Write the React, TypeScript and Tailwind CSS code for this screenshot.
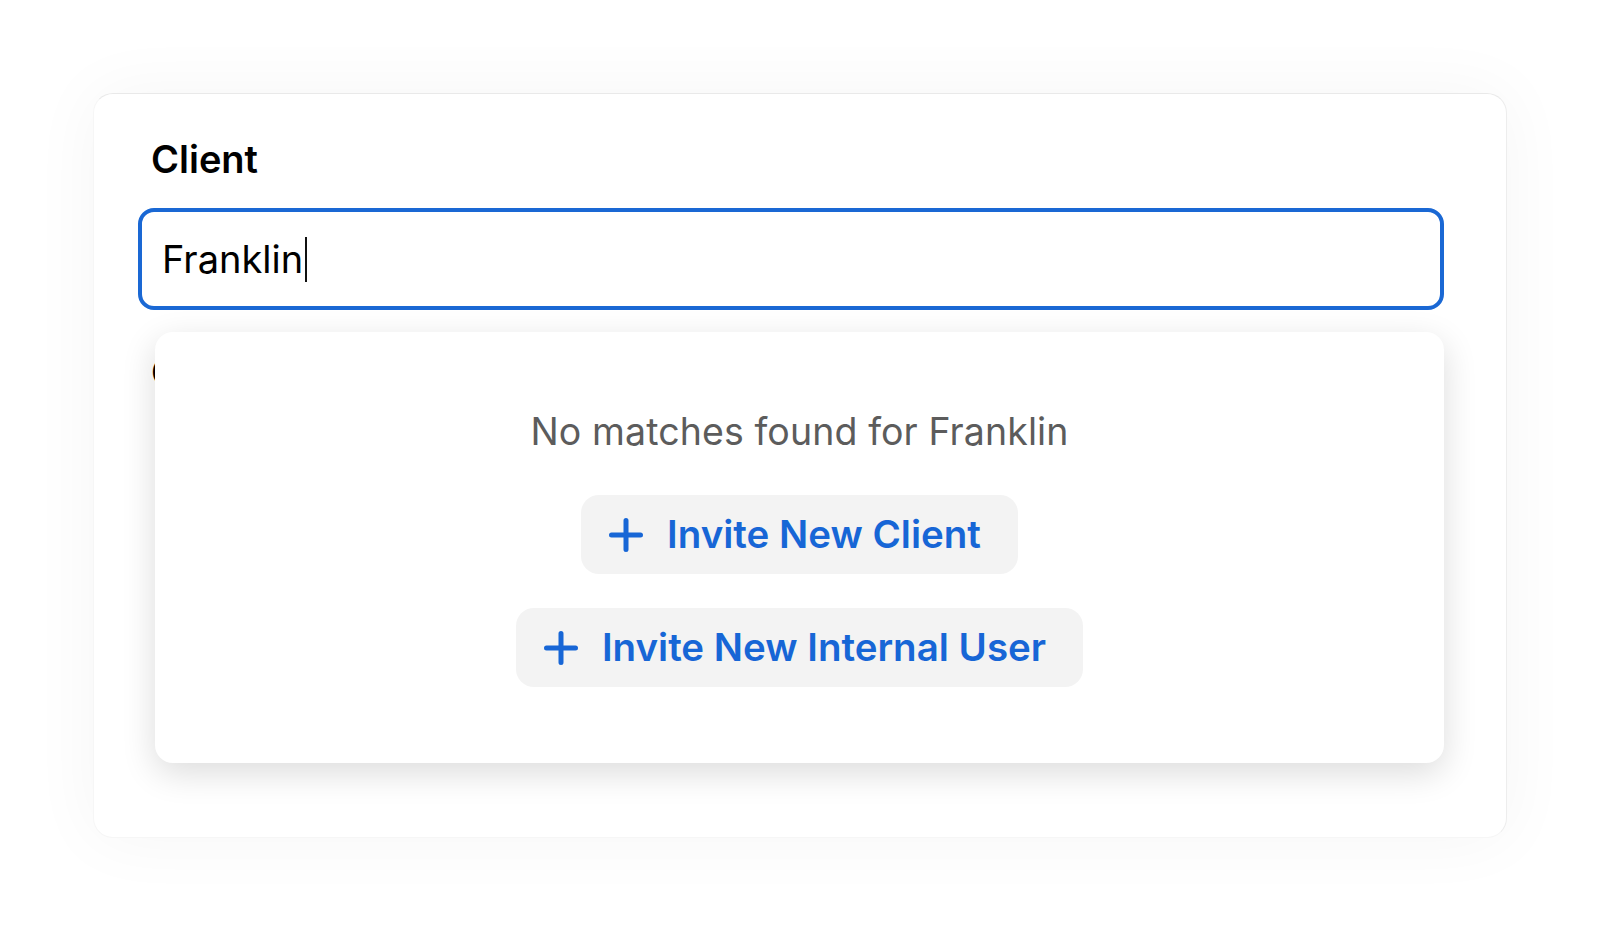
import { useState } from "react";

function PlusIcon() {
  return (
    <svg width="34" height="34" viewBox="0 0 34 34" fill="none">
      <path
        d="M17 2.5V31.5M2.5 17H31.5"
        stroke="currentColor"
        strokeWidth="5"
        strokeLinecap="round"
      />
    </svg>
  );
}

function InviteButton({ label }: { label: string }) {
  return (
    <button
      type="button"
      className="inline-flex items-center h-[79px] pl-[28px] pr-[37px] gap-[24px] rounded-[18px] bg-[#f3f3f3] text-[#1766d6] text-[38.5px] font-semibold leading-none"
    >
      <PlusIcon />
      <span>{label}</span>
    </button>
  );
}

function App() {
  const [busca] = useState<string>("Franklin");

  return (
    <div
      className="w-[1600px] h-[930px] bg-white flex items-start justify-center pt-[93px]"
      style={{ fontFamily: "Inter, 'Noto Sans', 'Liberation Sans', sans-serif" }}
    >
      <div className="w-[1414px] h-[745px] rounded-[20px] bg-white border border-t-[#e9e9e9] border-r-[#ededed] border-l-[#f6f6f6] border-b-[#f6f6f6] shadow-[0_0_70px_rgba(0,0,0,0.045)] pt-[42px] pl-[44px] pr-[62px]">
        <label className="block pl-[13px] text-[38px] leading-[46px] font-semibold text-black">
          Client
        </label>

        <div className="relative mt-[26px]">
          <div className="flex items-center h-[102px] rounded-[16px] border-4 border-[#1a68d4] pl-[20px]">
            <span className="text-[38px] leading-none text-black">{busca}</span>
            <span className="ml-[2px] w-[2px] h-[45px] bg-[#111]" />
          </div>

          {/* dropdown por cima do resto do formulario */}
          <div className="absolute left-[17px] right-0 top-full mt-[22px] z-10 bg-white rounded-[18px] shadow-[0_10px_34px_rgba(0,0,0,0.14)] pt-[78px] pb-[76px] flex flex-col items-center">
            <p className="text-[37.5px] leading-[44px] text-[#5c5c5c] tracking-[0.1px]">
              No matches found for {busca}
            </p>
            <div className="mt-[41px] flex flex-col items-center gap-[34px]">
              <InviteButton label="Invite New Client" />
              <InviteButton label="Invite New Internal User" />
            </div>
          </div>
        </div>

        <label className="block mt-[39px] pl-[13px] text-[38px] leading-[46px] font-semibold text-black">
          Company
        </label>
      </div>
    </div>
  );
}

export default App;
